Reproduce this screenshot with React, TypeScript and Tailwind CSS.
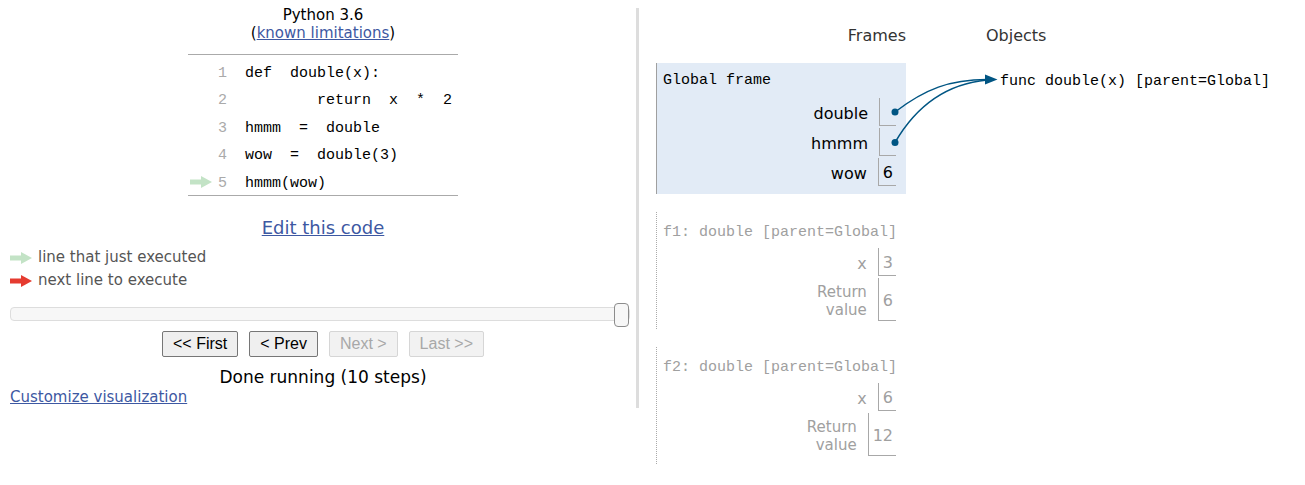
const SANS = "font-['DejaVu_Sans',Verdana,sans-serif]"
const MONO = "font-['Liberation_Mono',monospace]"

const CODE_LINES = [
  'def  double(x):',
  '        return  x  *  2',
  'hmmm  =  double',
  'wow  =  double(3)',
  'hmmm(wow)',
]

function Arrow({ color }: { color: string }) {
  return (
    <svg width="22" height="14" viewBox="0 0 22 14" className="shrink-0">
      <rect x="0" y="4.5" width="12" height="5" fill={color} />
      <polygon points="11,1 22,7 11,13" fill={color} />
    </svg>
  )
}

function CodePanel() {
  return (
    <div className="mx-auto mt-[12px] w-[270px] border-t border-b border-[#aaaaaa] pt-[3px]">
      {CODE_LINES.map((line, i) => (
        <div key={i} className={`flex h-[27.5px] items-center ${MONO} text-[15px]`}>
          <div className="flex w-[30px] pl-[2px] pt-[1px]">
            {i === 4 && <Arrow color="#c3e3c6" />}
          </div>
          <div className="w-[9px] pt-[5px] text-right text-[#aaaaaa]">{i + 1}</div>
          <div className="ml-[18px] whitespace-pre pt-[5px] text-black">{line}</div>
        </div>
      ))}
    </div>
  )
}

function NavButton({ label, disabled }: { label: string; disabled?: boolean }) {
  return (
    <button
      disabled={disabled}
      className={
        "h-[26px] rounded-[2px] border px-[10px] font-['Liberation_Sans',Arial,sans-serif] text-[16px] leading-none " +
        (disabled
          ? 'border-[#d6d6d6] bg-[#f2f2f2] text-[#a8a8a8]'
          : 'border-[#767676] bg-[#efefef] text-black')
      }
    >
      {label}
    </button>
  )
}

function LeftPanel() {
  return (
    <div className={`w-[636px] shrink-0 pl-[10px] pt-[5.5px] ${SANS}`}>
      <div className="text-center text-[15px] leading-[18px] text-black">
        <div>Python 3.6</div>
        <div>
          (<a className="text-[#3d58a2] underline">known limitations</a>)
        </div>
      </div>

      <CodePanel />

      <div className="mt-[20.5px] text-center text-[18px] leading-[22px]">
        <a className="text-[#3d58a2] underline">Edit this code</a>
      </div>

      <div className="mt-[7.5px] text-[15px] text-[#555555]">
        <div className="flex h-[23px] items-center gap-[6px]">
          <Arrow color="#c3e3c6" />
          <span>line that just executed</span>
        </div>
        <div className="flex h-[23px] items-center gap-[6px]">
          <Arrow color="#e53b30" />
          <span>next line to execute</span>
        </div>
      </div>

      {/* slider */}
      <div className="relative mt-[14.5px] h-[14px] w-[620px] rounded-[4px] border border-[#dddddd] bg-[#f7f7f7]">
        <div className="absolute right-0 top-[-5px] h-[24px] w-[15px] rounded-[4px] border border-[#8c8c8c] bg-[#f7f7f7]" />
      </div>

      <div className="mt-[10px] flex justify-center gap-[11px]">
        <NavButton label="<< First" />
        <NavButton label="< Prev" />
        <NavButton label="Next >" disabled />
        <NavButton label="Last >>" disabled />
      </div>

      <div className="mt-[10.5px] text-center text-[17px] leading-[20px] text-black">
        Done running (10 steps)
      </div>

      <div className="mt-[1px] text-[15px] leading-[18px]">
        <a className="text-[#3d58a2] underline">Customize visualization</a>
      </div>
    </div>
  )
}

type Row = { label: string; value?: string; tall?: boolean }

function FrameRows({ rows, dim }: { rows: Row[]; dim?: boolean }) {
  const text = dim ? 'text-[#a0a0a0]' : 'text-black'
  return (
    <div className="flex flex-col gap-[2px] pr-[10px]">
      {rows.map((r) => (
        <div key={r.label} className={`flex justify-end ${r.tall ? 'h-[43px]' : 'h-[28px]'}`}>
          <div
            className={
              'flex items-center pr-[11px] pt-[3px] text-right ' +
              text +
              (r.tall ? ' text-[15px] leading-[18px]' : ' text-[16px]')
            }
          >
            {r.tall ? (
              <span>
                Return
                <br />
                value
              </span>
            ) : (
              r.label
            )}
          </div>
          <div
            className={`flex min-w-[17px] items-center border-b border-l border-[#a8a8a8] pl-[4px] pr-[3px] pt-[3px] text-[16px] ${text}`}
          >
            {r.value}
          </div>
        </div>
      ))}
    </div>
  )
}

function RightPanel() {
  return (
    <div className={`flex pl-[17px] pt-[25.5px] ${SANS}`}>
      <div className="w-[250px]">
        <div className="h-[20px] text-right text-[16px] leading-[20px] text-[#333333]">Frames</div>

        <div className="mt-[17.5px] border-l border-[#a0a0a0] bg-[#e2ebf6] pb-[8px] pt-[9px]">
          <div className={`pl-[6px] ${MONO} text-[15px] leading-[18px] text-black`}>Global frame</div>
          <div className="mt-[8px]">
            <FrameRows rows={[{ label: 'double' }, { label: 'hmmm' }, { label: 'wow', value: '6' }]} />
          </div>
        </div>

        <div className="mt-[18px] border-l border-dotted border-[#aaaaaa] pb-[8px] pt-[12px]">
          <div className={`pl-[6px] ${MONO} text-[15px] leading-[18px] text-[#a0a0a0]`}>
            f1: double [parent=Global]
          </div>
          <div className="mt-[6px]">
            <FrameRows dim rows={[{ label: 'x', value: '3' }, { label: 'Return value', value: '6', tall: true }]} />
          </div>
        </div>

        <div className="mt-[18px] border-l border-dotted border-[#aaaaaa] pb-[8px] pt-[12px]">
          <div className={`pl-[6px] ${MONO} text-[15px] leading-[18px] text-[#a0a0a0]`}>
            f2: double [parent=Global]
          </div>
          <div className="mt-[6px]">
            <FrameRows dim rows={[{ label: 'x', value: '6' }, { label: 'Return value', value: '12', tall: true }]} />
          </div>
        </div>
      </div>

      <div className="ml-[80px]">
        <div className="h-[20px] text-[16px] leading-[20px] text-[#333333]">Objects</div>
        <div className={`mt-[27px] pl-[14px] ${MONO} text-[15px] leading-[18px] text-black whitespace-pre`}>
          func double(x) [parent=Global]
        </div>
      </div>
    </div>
  )
}

export default function App() {
  return (
    <div className="relative h-[485px] w-[1305px] overflow-hidden bg-white">
      <div className="flex">
        <LeftPanel />
        <div className="mt-[8px] h-[400px] w-[3px] shrink-0 bg-[#dddddd]" />
        <RightPanel />
      </div>

      {/* pointer arrows from frame slots to heap object */}
      <svg className="pointer-events-none absolute left-0 top-0" width="1305" height="485">
        <path d="M895,112 C925,89 950,79.5 987,79.5" fill="none" stroke="#005583" strokeWidth="1.5" />
        <path d="M895,142.5 C915,108 945,84 987,80" fill="none" stroke="#005583" strokeWidth="1.5" />
        <polygon points="985,74.5 997.5,79.5 985,84.5" fill="#005583" />
        <circle cx="895" cy="112" r="3.5" fill="#005583" />
        <circle cx="895" cy="142.5" r="3.5" fill="#005583" />
      </svg>
    </div>
  )
}
